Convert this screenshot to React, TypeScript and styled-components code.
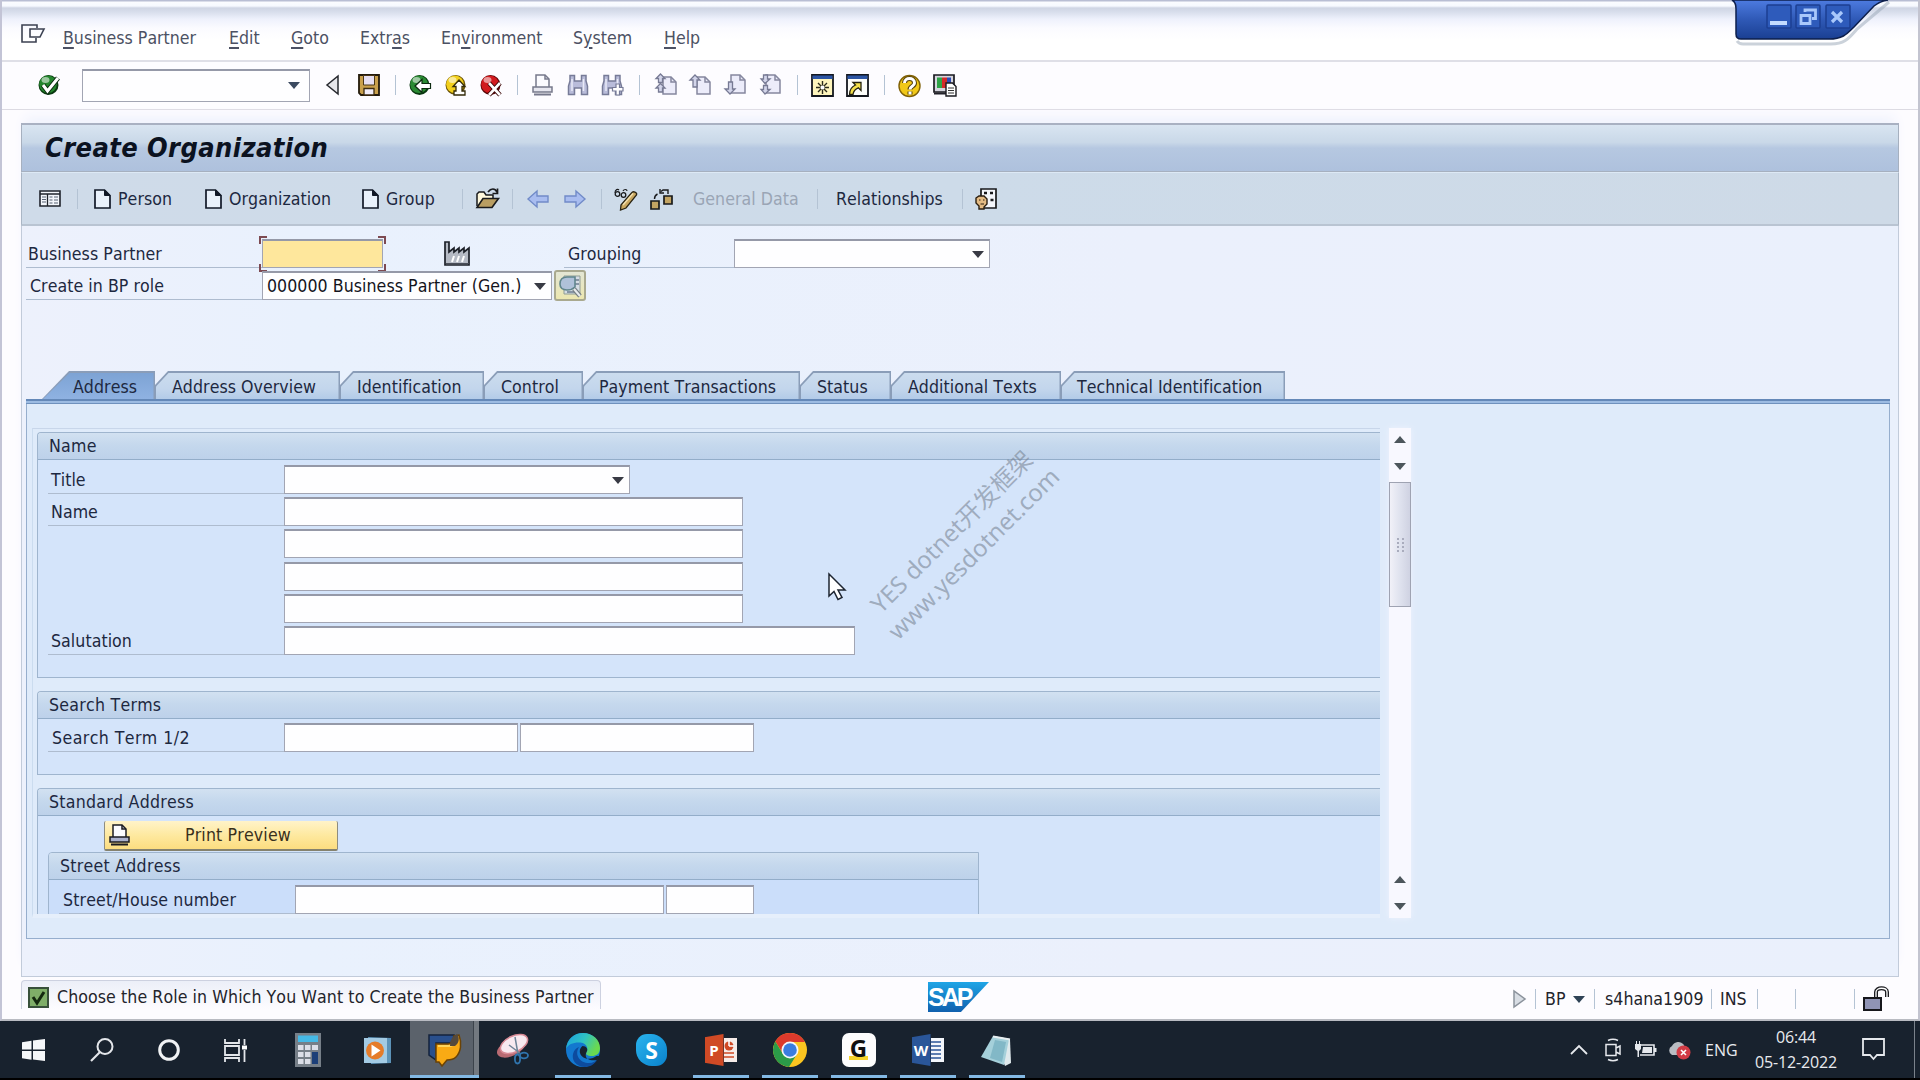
import React from "react";
import styled, { createGlobalStyle, css } from "styled-components";

const GlobalStyle = createGlobalStyle`
  * {
    box-sizing: border-box;
  }
  body {
    margin: 0;
    overflow: hidden;
    background: #000;
    font-family: "DejaVu Sans Condensed", "DejaVu Sans", sans-serif;
    font-stretch: condensed;
    font-kerning: none;
    font-size: 17.6px;
    letter-spacing: 0.05px;
    color: #1d2840;
  }
  svg {
    display: block;
    flex: none;
    overflow: visible;
  }
`;

interface ISpace {
  $ml?: number;
  $w?: number;
}

const Screen = styled.div`
  width: 1920px;
  height: 1080px;
  display: flex;
  flex-direction: column;
  position: relative;
  overflow: hidden;
  background: #000;
`;

const Window = styled.div`
  height: 1021px;
  display: flex;
  flex-direction: column;
  background: #fdfcff;
  border-left: 2px solid #c3c4d6;
  border-right: 2px solid #c3c4d0;
  border-bottom: 2px solid #b9bbc2;
`;

const MenuBar = styled.nav`
  height: 60px;
  flex: none;
  display: flex;
  padding-left: 19px;
  align-items: center;
  padding-top: 15px;
  color: #4c5163;
  letter-spacing: 0;
  background: linear-gradient(
    #b9bed4 0,
    #b9bed4 1px,
    #fbfcff 2px,
    #f6f9ff 6px,
    #cfd5e4 8px,
    #d8deec 12px,
    #eef1fc 19px,
    #fbfbff 28px,
    #fff 40px
  );
`;

const MenuIcon = styled.span`
  margin-top: -8px;
`;

const MenuItem = styled.span<ISpace>`
  margin-left: ${(props) => props.$ml ?? 32}px;
  width: ${(props) => props.$w}px;
  white-space: nowrap;
  u {
    text-underline-offset: 3px;
    text-decoration-thickness: 1.5px;
  }
`;

const SystemBar = styled.div`
  height: 50px;
  flex: none;
  display: flex;
  align-items: center;
  padding-left: 36px;
  padding-bottom: 1px;
  border-top: 2px solid #dfdfe7;
  border-bottom: 1px solid #dcdae2;
`;

const Slot = styled.span<ISpace>`
  display: flex;
  align-items: center;
  flex: none;
  margin-left: ${(props) => props.$ml ?? 13}px;
  width: ${(props) => props.$w ?? 22}px;
  white-space: nowrap;
`;

const Divider = styled.span<ISpace>`
  flex: none;
  margin-left: ${(props) => props.$ml ?? 15}px;
  width: 1px;
  height: 20px;
  background: #b4c3d4;
`;

const fieldEdge = css`
  border: 1px solid #a2a5b3;
  border-top: 2px solid #9599a8;
`;

const Field = styled.div<ISpace & { $h?: number; $pad?: number; $key?: boolean }>`
  ${fieldEdge}
  flex: none;
  position: relative;
  display: flex;
  align-items: center;
  justify-content: space-between;
  width: ${(props) => props.$w}px;
  height: ${(props) => props.$h ?? 29}px;
  margin-left: ${(props) => props.$ml ?? 0}px;
  padding: 0 ${(props) => props.$pad ?? 5}px 0 4px;
  background: ${(props) => (props.$key ? "#fee79c" : "#fefeff")};
  color: #14141c;
  white-space: nowrap;
`;

const Caret = styled.i<{ $up?: boolean; $color?: string }>`
  width: 0;
  height: 0;
  flex: none;
  border: 6.5px solid transparent;
  border-top: ${(props) => (props.$up ? "0" : `7px solid ${props.$color ?? "#383a44"}`)};
  border-bottom: ${(props) => (props.$up ? `7px solid ${props.$color ?? "#4c565c"}` : "0")};
`;

const ComboCaret = styled(Caret)`
  margin-left: auto;
`;

const LowerCaret = styled(Caret)`
  margin-top: 20px;
`;

const Work = styled.main`
  margin: 13px 19px 0 19px;
  height: 854px;
  flex: none;
  display: flex;
  flex-direction: column;
  border: 1px solid #c2cbda;
  border-top: 0;
  background: linear-gradient(90deg, #edf1fc, #e9f1fd 15%, #ebf0fc 60%, #eaf0fc);
  box-shadow: 0 -10px 12px -4px #eff2fd;
`;

const TitleBar = styled.h1`
  margin: 0 -1px;
  height: 49px;
  flex: none;
  padding-left: 23px;
  line-height: 45px;
  font-size: 27px;
  font-weight: bold;
  font-style: italic;
  color: #0b1220;
  letter-spacing: 0.4px;
  border: 1px solid #a6b0bf;
  border-top: 2px solid #a9b1c2;
  background: linear-gradient(#d9e5f1, #c9d8e8 38%, #b6c8e1 50%, #aec1dd);
`;

const AppBar = styled.div`
  margin: 0 -1px;
  height: 54px;
  flex: none;
  display: flex;
  align-items: center;
  padding-left: 17px;
  border: 1px solid #aab6c5;
  border-top: 1px solid #dde9f5;
  border-bottom: 2px solid #b9c4d2;
  background: linear-gradient(90deg, #cfdbe9, #cddbe9 50%, #cedae7);
`;

const Muted = styled.span`
  color: #9aa5b5;
`;

const Row = styled.div<{ $top?: number; $left?: number }>`
  display: flex;
  flex: none;
  height: 29px;
  margin-top: ${(props) => props.$top ?? 3.2}px;
  padding-left: ${(props) => props.$left ?? 0}px;
`;

const Label = styled.label<ISpace & { $pad?: number; $line?: boolean; $track?: number }>`
  flex: none;
  height: 29px;
  line-height: 31px;
  width: ${(props) => props.$w ?? 236}px;
  margin-left: ${(props) => props.$ml ?? 0}px;
  padding-left: ${(props) => props.$pad ?? 3}px;
  letter-spacing: ${(props) => props.$track ?? 0.05}px;
  border-bottom: 1px solid ${(props) => (props.$line === false ? "transparent" : "#aebccf")};
  white-space: nowrap;
`;

const FocusMark = styled.svg`
  position: absolute;
  left: -4px;
  top: -5px;
`;

const RoleButton = styled.button`
  width: 32px;
  height: 31px;
  margin: -1px 0 0 2px;
  padding: 3px;
  border: 2px solid #a9a98f;
  border-radius: 3px;
  background: linear-gradient(#e3e6d4, #ece7b0);
`;

const TabStrip = styled.div`
  display: flex;
  margin: 71px 0 0 20px;
  height: 28px;
  flex: none;
`;

const Tab = styled.div<{ $w: number; $pad: number; $active?: boolean }>`
  --shape: ${(props) =>
    props.$active
      ? "polygon(27px 0, 100% 0, 100% 100%, 0 100%)"
      : "polygon(13px 0, 100% 0, 100% 100%, 0 100%, 0 14px)"};
  position: relative;
  flex: none;
  width: ${(props) => props.$w}px;
  padding-left: ${(props) => props.$pad}px;
  line-height: 32px;
  white-space: nowrap;
  background: #8a9db8;
  clip-path: var(--shape);
  &::before {
    content: "";
    position: absolute;
    inset: 1.5px 1.5px 0 1px;
    clip-path: var(--shape);
    background: ${(props) =>
      props.$active
        ? "linear-gradient(#7da3d4, #8fb2e2)"
        : "linear-gradient(#cbdcee, #c3d6ec 60%, #b3cbe8)"};
  }
  span {
    position: relative;
  }
`;

const PanelEdge = styled.div`
  height: 5px;
  margin-left: 4px;
  width: 1864px;
  flex: none;
  border-top: 2px solid #6488b8;
  border-bottom: 1px solid #6f91bd;
  background: #9cbbe2;
`;

const TabPanel = styled.section`
  margin-left: 4px;
  width: 1864px;
  height: 535px;
  flex: none;
  padding: 24px 0 0 5px;
  border: 1px solid #96aecd;
  border-top: 0;
  background: #dfebfa;
  display: flex;
  align-items: flex-start;
`;

const ScrollArea = styled.div`
  width: 1348px;
  height: 490px;
  overflow: hidden;
  padding: 3px 0 0 4px;
  border-top: 1px solid #c8d6ea;
  border-left: 1px solid #cbdcef;
  border-bottom: 4px solid #e6effb;
`;

const Group = styled.div<{ $h: number; $w?: number; $tone?: string; $ml?: number; $closed?: boolean }>`
  width: ${(props) => props.$w ?? 1343}px;
  height: ${(props) => props.$h}px;
  margin: 0 0 13px ${(props) => props.$ml ?? 0}px;
  background: ${(props) => props.$tone ?? "#d4e4fa"};
  border: 1px solid #9fb5ce;
  border-right-width: ${(props) => (props.$closed ? 1 : 0)}px;
  border-radius: 4px 0 0 0;
  overflow: hidden;
`;

const GroupTitle = styled.h2`
  margin: 0;
  height: 27px;
  padding-left: 11px;
  font-size: 17.6px;
  font-weight: normal;
  line-height: 27px;
  letter-spacing: 0.25px;
  border-bottom: 1px solid #93adc9;
  background: linear-gradient(#d2e1f1, #c5d8ed 45%, #bdd1ea);
`;

const PrintButton = styled.button`
  width: 234px;
  height: 30px;
  margin: 5px 0 1px 66px;
  padding: 0 0 0 4px;
  display: flex;
  align-items: center;
  font: inherit;
  letter-spacing: 0.15px;
  color: #39301c;
  border: 1px solid #8d8c80;
  border-top: 0;
  border-bottom: 2px solid #85826e;
  border-radius: 2px;
  background: linear-gradient(#fff3c9, #fee9a0 50%, #fcdd80);
  span {
    margin-left: 55px;
  }
`;

const Scrollbar = styled.div`
  width: 22px;
  height: 490px;
  margin-left: 9px;
  display: flex;
  flex-direction: column;
  align-items: center;
  background: #f8f8ff;
  box-shadow: 0 0 6px #eef2fd;
  padding: 8px 0 8px;
`;

const Thumb = styled.div`
  width: 22px;
  height: 125px;
  margin: 12px 0 auto;
  border: 1px solid #9fa3b2;
  background: linear-gradient(90deg, #f1f1f8, #dfe2ee 50%, #cfd2e2);
  display: flex;
  align-items: center;
  justify-content: center;
`;

const StatusBar = styled.footer`
  height: 42px;
  display: flex;
  padding: 3px 0 0 19px;
  align-items: flex-start;
  color: #23242b;
`;

const StatusText = styled.div`
  width: 580px;
  height: 29px;
  display: flex;
  align-items: center;
  padding: 4px 0 0 6px;
  gap: 8px;
  border: 1px solid #cdd1e0;
  border-bottom: 0;
  border-radius: 4px 4px 0 0;
  background: linear-gradient(#eceff8, #fdfcff);
  letter-spacing: 0.08px;
  white-space: nowrap;
`;

const SapLogo = styled.div`
  width: 61px;
  height: 30px;
  margin: 2px 0 0 327px;
  clip-path: polygon(0 0, 100% 0, 54% 100%, 0 100%);
  background: linear-gradient(#1fa5e6, #1060ae);
  color: #fff;
  font: bold 25px/31px "Liberation Sans", Arial, sans-serif;
  letter-spacing: -3px;
`;

const StatusInfo = styled.div`
  display: flex;
  align-items: center;
  height: 26px;
  margin: 6px 0 0 524px;
`;

const Taskbar = styled.div`
  height: 57px;
  flex: none;
  display: flex;
  background: #18222e;
  color: #e8ebef;
  font-family: "Open Sans", "Noto Sans", sans-serif;
  font-stretch: normal;
  font-size: 16px;
`;

const Task = styled.div<{ $w?: number; $active?: boolean; $open?: boolean }>`
  width: ${(props) => props.$w ?? 69}px;
  height: 57px;
  flex: none;
  display: flex;
  align-items: center;
  justify-content: center;
  padding-top: 1px;
  position: relative;
  background: ${(props) => (props.$active ? "#5b626b" : "none")};
  box-shadow: ${(props) => (props.$active ? "inset -5px 0 #737980, inset -6px 0 #3c434b" : "none")};
  &::after {
    content: "";
    display: ${(props) => (props.$open || props.$active ? "block" : "none")};
    position: absolute;
    bottom: 0;
    height: 3px;
    left: ${(props) => (props.$active ? 0 : 6.5)}px;
    right: ${(props) => (props.$active ? 0 : 6.5)}px;
    background: #83b9e4;
  }
`;

const SkypeBadge = styled.div`
  width: 31px;
  height: 32px;
  border-radius: 11px 16px 11px 16px;
  background: linear-gradient(135deg, #2ab4ee, #0a82cc);
  color: #fff;
  font: bold 23px/32px "Open Sans", sans-serif;
  text-align: center;
`;

const GBadge = styled.div`
  width: 34px;
  height: 34px;
  border-radius: 7px;
  background: linear-gradient(#f7d42c, #f7d42c) 7px 23px / 19px 4px no-repeat #fdfdfd;
  color: #111;
  font: bold 24px/29px "Open Sans", sans-serif;
  text-align: center;
`;

const OfficeIcon = styled.div<{ $color: string }>`
  display: flex;
  align-items: center;
  span {
    width: 19px;
    height: 32px;
    clip-path: polygon(0 10%, 100% 0, 100% 100%, 0 90%);
    background: ${(props) => props.$color};
    color: #fff;
    font: bold 15px/32px "Open Sans", sans-serif;
    text-align: center;
  }
`;

const Tray = styled.div`
  margin-left: auto;
  display: flex;
  align-items: center;
  width: 354px;
`;

const Clock = styled.div`
  width: 90px;
  margin-left: 14px;
  line-height: 25px;
  text-align: center;
  letter-spacing: -0.15px;
  padding-top: 1px;
`;

const ShowDesktop = styled.i`
  width: 1px;
  height: 57px;
  margin-left: auto;
  margin-right: 5px;
  background: #7a828b;
`;

const WindowControls = styled.svg`
  position: absolute;
  left: 1729px;
  top: 0;
`;

const Pointer = styled.svg`
  position: absolute;
  left: 828px;
  top: 573px;
`;

const Watermark = styled.div`
  position: absolute;
  left: 832px;
  top: 511px;
  width: 260px;
  text-align: center;
  transform: rotate(-45deg);
  font-family: "Noto Sans", "Noto Sans CJK SC", sans-serif;
  font-stretch: normal;
  font-size: 24px;
  line-height: 31px;
  letter-spacing: 0;
  color: rgba(118, 130, 145, 0.58);
  white-space: nowrap;
`;

/* ---------- icons ---------- */

interface IBox {
  w?: number;
  h?: number;
  children: React.ReactNode;
}

const Ico = ({ w = 22, h = 22, children }: IBox) => (
  <svg width={w} height={h} viewBox={`0 0 ${w} ${h}`} fill="none">
    {children}
  </svg>
);

const Ball = ({ color, edge, children }: { color: string; edge: string; children: React.ReactNode }) => (
  <Ico>
    <circle cx="10.5" cy="11" r="10" fill={edge} />
    <circle cx="10" cy="10.3" r="8.8" fill={color} />
    <ellipse cx="7.5" cy="6" rx="4" ry="3" fill="#fff" opacity=".55" />
    {children}
  </Ico>
);

const NewPage = () => (
  <Ico w={17} h={20}>
    <path d="M1 1h9.500l5.500 5.500V19H1z" fill="#e9f1fb" stroke="#111827" strokeWidth="1.700" />
    <path d="M10.500 1v5.500H16z" fill="#111827" stroke="#111827" />
  </Ico>
);

const PrinterIcon = ({ ink, fill }: { ink: string; fill: string }) => (
  <Ico w={21} h={22}>
    <path d="M4 13V1h9l4 4v8" fill="#fbfbff" stroke={ink} strokeWidth="1.500" />
    <path d="M13 1v4h4" stroke={ink} strokeWidth="1.500" />
    <path d="M1 13h19v5H1z" fill={fill} stroke={ink} strokeWidth="1.500" />
    <path d="M2 20.500h17" stroke={ink} strokeWidth="2" />
  </Ico>
);

const Binoculars = ({ plus }: { plus?: boolean }) => (
  <Ico w={23}>
    <path
      d="M3 1.500h4.500V7h7V1.500H19V7l1.500 5v8.500h-6V14h-7v6.500h-6V12L3 7z"
      fill="#b9bcda"
      stroke="#777b98"
      strokeWidth="1.500"
    />
    <path d="M5 5v12M16.500 5v12" stroke="#e9eaf8" strokeWidth="1.500" />
    {plus && (
      <path d="M15 10h3.500v3.500H22V17h-3.500v4H15v-4h-3.500v-3.500H15z" fill="#fff" stroke="#777b98" strokeWidth="1.200" />
    )}
  </Ico>
);

const PageNav = ({ arrows, flip }: { arrows: string; flip?: boolean }) => (
  <Ico>
    <path d={flip ? "M6 1h9l5 5v13H6z" : "M8 3h8l5 5v12H8z"} fill="#ececfa" stroke="#85879f" strokeWidth="1.500" />
    <path d={flip ? "M15 1v5h5" : "M16 3v5h5"} stroke="#85879f" strokeWidth="1.500" />
    <path d={arrows} fill="#d3d5ea" stroke="#777a94" strokeWidth="1.300" />
  </Ico>
);

const BlueArrow = ({ right }: { right?: boolean }) => (
  <Ico w={22} h={18}>
    <path
      d="M1 9l9-8v5h11v6H10v5z"
      transform={right ? "translate(22 0) scale(-1 1)" : undefined}
      fill="#a9bdf0"
      stroke="#718bc8"
      strokeWidth="1.400"
    />
  </Ico>
);

const SystemTools = () => (
  <SystemBar>
    <Slot $ml={0}>
      <Ball color="#23852c" edge="#0a3810">
        <path d="M5 11l4.500 6L20 4" stroke="#0b2c10" strokeWidth="5" />
        <path d="M5 11l4.500 6L20 4" stroke="#fff" strokeWidth="3" />
      </Ball>
    </Slot>
    <Field $w={228} $h={33} $ml={22} $pad={9}>
      <ComboCaret $color="#3b4a60" />
    </Field>
    <Slot $ml={16} $w={13}>
      <Ico w={13} h={20}>
        <path d="M12 1v18L1 10z" fill="#e6e6ea" stroke="#26282e" strokeWidth="1.500" />
      </Ico>
    </Slot>
    <Slot $ml={19}>
      <Ico>
        <path d="M1 1h20v20H3l-2-2z" fill="#c9a04c" stroke="#231a0c" strokeWidth="1.800" />
        <path d="M5.500 1.500h11V11h-11z" fill="#e6dff2" stroke="#4a3616" />
        <path d="M6 14.500h10V21H6z" fill="#f2eefa" stroke="#3c2b10" strokeWidth="1.300" />
      </Ico>
    </Slot>
    <Divider />
    <Slot>
      <Ball color="#2a8a33" edge="#0a3810">
        <path d="M6 12l7-6.500V9.500h8.500v5H13v4z" fill="#fff" stroke="#0c2a10" strokeWidth="1.200" />
      </Ball>
    </Slot>
    <Slot $ml={14}>
      <Ball color="#f2cf1c" edge="#6b5305">
        <path d="M14 6l6 6.500h-3V17h3v4H9v-4h2v-4.500H8z" fill="#fff" stroke="#332a08" strokeWidth="1.300" />
      </Ball>
    </Slot>
    <Slot>
      <Ball color="#d11a1e" edge="#5a0708">
        <path d="M9 9l11 12M20 9L9 21" stroke="#3a0606" strokeWidth="4.500" />
        <path d="M9 9l11 12M20 9L9 21" stroke="#fff" strokeWidth="2.600" />
      </Ball>
    </Slot>
    <Divider />
    <Slot $ml={14} $w={21}>
      <PrinterIcon ink="#77798c" fill="#e6e6ef" />
    </Slot>
    <Slot $ml={14}>
      <Binoculars />
    </Slot>
    <Slot $ml={12} $w={23}>
      <Binoculars plus />
    </Slot>
    <Divider />
    <Slot $ml={15}>
      <PageNav arrows="M5.500 0l4.500 4.500H7.500v4H3.500v-4H1zM5.500 9.500L10 14H7.500v4H3.500v-4H1z" />
    </Slot>
    <Slot $ml={12}>
      <PageNav arrows="M6 1l5 5H8v7H4V6H1z" />
    </Slot>
    <Slot $ml={14}>
      <PageNav flip arrows="M5 20l5-5H7.500V8h-4v7H0z" />
    </Slot>
    <Slot>
      <PageNav flip arrows="M5 9.500l5-4.500H7.500V1h-4v4H1zM5 20l5-4.500H7.500v-4h-4v4H1z" />
    </Slot>
    <Divider />
    <Slot>
      <Ico w={23} h={23}>
        <path d="M1 1h21v21H1z" fill="#fff6bd" stroke="#15181f" strokeWidth="1.800" />
        <path d="M1.500 1.500h20V5h-20z" fill="#2c55a4" />
        <path d="M11.500 7v13M5 13.500h13M7 9l9 9M16 9l-9 9" stroke="#2b2b1c" strokeWidth="1.400" />
        <circle cx="11.500" cy="13.500" r="2" fill="#fff" />
      </Ico>
    </Slot>
    <Slot>
      <Ico w={23} h={23}>
        <path d="M1 1h21v21H1z" fill="#fdfdfa" stroke="#15181f" strokeWidth="1.800" />
        <path d="M1.500 1.500h20V5h-20z" fill="#2c55a4" />
        <path d="M7 8.500h8v8l-2.700-2.700C9 15 7.500 17 7 20.500H3.500C3.500 16 6 12.500 9.500 11z" fill="#f5e04a" stroke="#22200e" strokeWidth="1.300" />
      </Ico>
    </Slot>
    <Divider $ml={16} />
    <Slot $w={23}>
      <Ico w={23} h={23}>
        <circle cx="11.500" cy="12" r="10.500" fill="#f1c818" stroke="#806107" strokeWidth="1.400" />
        <path d="M6.500 9c0-6 10-6 10 0 0 3.500-4.500 3-4.500 6.500M12 17.500v3" stroke="#54400a" strokeWidth="5" />
        <path d="M6.500 9c0-6 10-6 10 0 0 3.500-4.500 3-4.500 6.500M12 17.500v3" stroke="#fff" strokeWidth="3" />
      </Ico>
    </Slot>
    <Slot $ml={12} $w={24}>
      <Ico w={24} h={23}>
        <path d="M1 1h20v17H1z" fill="#d5d5de" stroke="#1a1a20" strokeWidth="1.700" />
        <path d="M4 3.500h5V14H4z" fill="#2fa347" />
        <path d="M9 3.500h5V14H9z" fill="#d42a2a" />
        <path d="M14 3.500h4V14h-4z" fill="#2c49b5" />
        <path d="M1 19.500h14" stroke="#22222a" strokeWidth="2" />
        <path d="M13 9h6.500l3.500 3.500V22H13z" fill="#fff" stroke="#1a1a20" strokeWidth="1.400" />
        <path d="M15 14h6M15 16.500h6M15 19h6" stroke="#333" />
      </Ico>
    </Slot>
  </SystemBar>
);

const AppTools = () => (
  <AppBar>
    <Slot $ml={0}>
      <Ico h={17}>
        <path d="M1 1h20v15H1z" fill="#f3f6fb" stroke="#20242c" strokeWidth="1.600" />
        <path d="M1 4h20M8.500 4v12" stroke="#20242c" strokeWidth="1.300" />
        <path d="M3 7h4M3 9.500h4M3 12h4M10.500 7h3M15 7h4M10.500 10h3M15 10h4M10.500 13h3M15 13h4" stroke="#596273" strokeWidth="1.200" />
      </Ico>
    </Slot>
    <Divider $ml={16} />
    <Slot $ml={16} $w={24}>
      <NewPage />
    </Slot>
    <Slot $ml={0} $w={87}>
      Person
    </Slot>
    <Slot $ml={0} $w={24}>
      <NewPage />
    </Slot>
    <Slot $ml={0} $w={133}>
      Organization
    </Slot>
    <Slot $ml={0} $w={24}>
      <NewPage />
    </Slot>
    <Slot $ml={0} $w={47}>
      Group
    </Slot>
    <Divider $ml={29} />
    <Slot $w={23}>
      <Ico w={24} h={21}>
        <path d="M1 18V6l2-2h5l2 3h7v4" fill="#fff8dc" stroke="#191a1c" strokeWidth="1.500" />
        <path d="M1 19.500l6-9h15.500l-6.500 9z" fill="#b99e62" stroke="#191a1c" strokeWidth="1.600" />
        <path d="M12 4c3-4 7-4 9 0M21.500.500v5h-5" stroke="#191a1c" strokeWidth="1.700" />
      </Ico>
    </Slot>
    <Divider $ml={13} />
    <Slot $ml={14}>
      <BlueArrow />
    </Slot>
    <Slot $ml={15}>
      <BlueArrow right />
    </Slot>
    <Divider $ml={15} />
    <Slot $ml={12} $w={24}>
      <Ico w={24} h={22}>
        <path d="M7 17L17.500 5c1.500-2.500 6-.500 5 2L12 20l-5.500 2z" fill="#c9a760" stroke="#2a2413" strokeWidth="1.300" />
        <path d="M9 17L19 5.500" stroke="#f1dfae" strokeWidth="1.500" />
        <path d="M1 5c0-4 3-4 4-3M9 3c1-2 4-2 4 0" stroke="#191a1c" strokeWidth="1.200" />
        <circle cx="3.500" cy="6" r="2.300" stroke="#191a1c" strokeWidth="1.300" />
        <circle cx="9.500" cy="7" r="2.300" stroke="#191a1c" strokeWidth="1.300" />
      </Ico>
    </Slot>
    <Slot $ml={12}>
      <Ico w={23} h={22}>
        <path d="M1 13h8v8H1z" fill="#c3a462" stroke="#191a1c" strokeWidth="1.700" />
        <path d="M14 8h8v8h-8z" fill="#c3a462" stroke="#191a1c" strokeWidth="1.700" />
        <path d="M4.500 11c0-3 1-4 3-5M11 3.500l2-1.500h5v4M10 1v4h4" stroke="#191a1c" strokeWidth="1.400" />
      </Ico>
    </Slot>
    <Slot $ml={21} $w={104}>
      <Muted>General Data</Muted>
    </Slot>
    <Divider $ml={20} />
    <Slot $ml={18} $w={107}>
      Relationships
    </Slot>
    <Divider $ml={19} />
    <Slot $ml={12}>
      <Ico h={22}>
        <path d="M6 1h15v19H6z" fill="#f4f6fb" stroke="#191a1c" strokeWidth="1.700" />
        <path d="M9 5h3M15 5h3M15.500 12h3" stroke="#191a1c" strokeWidth="2.500" />
        <path d="M1 10l3-2h5l3 3v5l-3 3v2H4v-3l-3-3z" fill="#e4bb84" stroke="#2a1e10" strokeWidth="1.400" />
        <path d="M4 12h1.500M8 12h1.500M5.500 16h3.500" stroke="#2a1e10" strokeWidth="1.200" />
      </Ico>
    </Slot>
  </AppBar>
);

const tabs = [
  { text: "Address", w: 113, pad: 31, active: true },
  { text: "Address Overview", w: 185, pad: 17 },
  { text: "Identification", w: 144, pad: 17 },
  { text: "Control", w: 99, pad: 17 },
  { text: "Payment Transactions", w: 217, pad: 16 },
  { text: "Status", w: 91, pad: 17 },
  { text: "Additional Texts", w: 170, pad: 17 },
  { text: "Technical Identification", w: 224, pad: 16 },
];

const AddressTab = () => (
  <TabPanel>
    <ScrollArea>
      <Group $h={246}>
        <GroupTitle>Name</GroupTitle>
        <Row $top={5} $left={10}>
          <Label>Title</Label>
          <Field $w={346}>
            <ComboCaret />
          </Field>
        </Row>
        <Row $left={10}>
          <Label>Name</Label>
          <Field $w={459} />
        </Row>
        <Row $left={10}>
          <Label $line={false} />
          <Field $w={459} />
        </Row>
        <Row $left={10}>
          <Label $line={false} />
          <Field $w={459} />
        </Row>
        <Row $left={10}>
          <Label $line={false} />
          <Field $w={459} />
        </Row>
        <Row $left={10}>
          <Label>Salutation</Label>
          <Field $w={571} />
        </Row>
      </Group>
      <Group $h={84}>
        <GroupTitle>Search Terms</GroupTitle>
        <Row $top={4} $left={10}>
          <Label $pad={4} $track={0.42}>
            Search Term 1/2
          </Label>
          <Field $w={234} />
          <Field $w={234} $ml={2} />
        </Row>
      </Group>
      <Group $h={160}>
        <GroupTitle>Standard Address</GroupTitle>
        <PrintButton>
          <PrinterIcon ink="#1b1b22" fill="#aab0cc" />
          <span>Print Preview</span>
        </PrintButton>
        <Group $h={120} $w={931} $ml={10} $tone="#cbdefa" $closed>
          <GroupTitle>Street Address</GroupTitle>
          <Row $top={5} $left={10}>
            <Label $pad={4} $track={0.15}>
              Street/House number
            </Label>
            <Field $w={369} />
            <Field $w={88} $ml={2} />
          </Row>
        </Group>
      </Group>
    </ScrollArea>
    <Scrollbar>
      <Caret $up />
      <LowerCaret $color="#4c565c" />
      <Thumb>
        <Ico w={9} h={14}>
          <path d="M2 0v14M7 0v14" stroke="#a9acbd" strokeWidth="2" strokeDasharray="2 2" />
        </Ico>
      </Thumb>
      <Caret $up />
      <LowerCaret $color="#4c565c" />
    </Scrollbar>
  </TabPanel>
);

const Tasks = () => (
  <Taskbar>
    <Task $w={67}>
      <Ico w={23} h={22}>
        <path d="M0 3.200l9.500-1.400V10.500H0zM11 1.600L23 0v10.500H11zM0 12h9.500v8.700L0 19.300zM11 12h12v10l-12-1.600z" fill="#f5f7f9" />
      </Ico>
    </Task>
    <Task>
      <Ico w={24} h={24}>
        <circle cx="15" cy="8.500" r="7.500" stroke="#e3e6ea" strokeWidth="2" />
        <path d="M10 14L1 23" stroke="#e3e6ea" strokeWidth="2.200" />
      </Ico>
    </Task>
    <Task $w={65}>
      <Ico>
        <circle cx="11" cy="11" r="9.300" stroke="#f1f3f5" strokeWidth="3" />
      </Ico>
    </Task>
    <Task $w={70}>
      <Ico w={24} h={23}>
        <path d="M1 0v4h14V0M1 7h14v9H1zM1 23v-4h14v4M20.500 0v6M20.500 11v12" stroke="#e3e6ea" strokeWidth="1.800" />
        <path d="M18 6.500h5v4h-5z" fill="#fff" />
      </Ico>
    </Task>
    <Task $w={74}>
      <Ico w={26} h={34}>
        <path d="M0 0h26v34H0z" fill="#767f88" />
        <path d="M3 2.500h20V9H3z" fill="#45b9e6" />
        <path d="M3 12h5.500v5H3zM10 12h5.500v5H10zM17 12h6v5h-6zM3 19h5.500v5H3zM10 19h5.500v5H10zM3 26h5.500v5H3zM10 26h5.500v5H10z" fill="#dcdfe8" />
        <path d="M17 19h6v12h-6z" fill="#1c3f78" />
      </Ico>
    </Task>
    <Task $w={65}>
      <Ico w={28} h={27}>
        <path d="M4 0l23 1v25l-20 1z" fill="#5c93b8" />
        <path d="M0 1h23v25H0z" fill="#a3cbe4" />
        <circle cx="11" cy="13.500" r="9" fill="#e57c2a" />
        <path d="M7.500 7.500l9 6-9 6z" fill="#fff" />
      </Ico>
    </Task>
    <Task $w={69} $active>
      <Ico w={34} h={33}>
        <path d="M1 1h25v8H8v17l-7-5z" fill="#294f8c" stroke="#14233d" strokeWidth="1.500" />
        <path
          d="M8 10h12c3 0 5-3 6-8l5-1c3 8 2 17-3 22-3 3-6 3-9 3l-5 6-3-4H8z"
          fill="#f9aa14"
          stroke="#6b4306"
          strokeWidth="1.500"
        />
        <path d="M10 12h11c3 0 5-2 6-4" stroke="#ffd45c" strokeWidth="2" />
        <path d="M22 12c0-6 2-9 7-12 3 4 2 9-2 12z" fill="#54493c" />
      </Ico>
    </Task>
    <Task>
      <Ico w={33} h={32}>
        <ellipse cx="14" cy="14" rx="15" ry="8" transform="rotate(-25 14 14)" fill="#b86a72" />
        <ellipse cx="17" cy="10" rx="14.500" ry="8" transform="rotate(-25 17 10)" fill="#f8eaf0" stroke="#d78a95" strokeWidth="1.500" />
        <path d="M18 3l3 17M12 11l12 9" stroke="#6f8498" strokeWidth="1.500" />
        <ellipse cx="20.500" cy="25" rx="2.600" ry="4.500" stroke="#3074ad" strokeWidth="1.800" />
        <ellipse cx="27" cy="21.500" rx="4" ry="2.800" stroke="#3074ad" strokeWidth="1.800" />
      </Ico>
    </Task>
    <Task $open>
      <Ico w={34} h={34}>
        <defs>
          <linearGradient id="wave" x1="0" y1="0" x2="1" y2=".4">
            <stop offset="0" stopColor="#1b9fe0" />
            <stop offset=".55" stopColor="#2fc3c4" />
            <stop offset="1" stopColor="#6bd94f" />
          </linearGradient>
        </defs>
        <circle cx="17" cy="17" r="17" fill="#1378cf" />
        <path d="M0 16C1 6 8 0 17 0c10 0 17 7 17 15 0 6-4 8-8 8-5 0-7-2-5.500-4 2-2.500 1-8.500-6-9.500C8 9 2 11 0 16z" fill="url(#wave)" />
        <path d="M13 14c-5 8 1 16 10 16 4 0 7-2 8.500-3.500C26 36 14 36 8.500 29 5 24 7 16 13 14z" fill="#0d4b9e" />
        <path d="M20.500 19c2-2.500 0-6-4-6-3 2-4.500 8 1 11.500 4.500 2.500 10 1 13-1.500l3.500 0-3 4c-5 1-14 0-10.500-8z" fill="#18222e" />
      </Ico>
    </Task>
    <Task>
      <SkypeBadge>S</SkypeBadge>
    </Task>
    <Task $open>
      <OfficeIcon $color="#d04a25">
        <span>P</span>
        <Ico w={13} h={24}>
          <path d="M0 0h13v24H0z" fill="#f6ece8" />
          <circle cx="5" cy="8" r="4.500" fill="#d04a25" />
          <path d="M5 8V2M5 8h5" stroke="#fff" strokeWidth="1.500" />
          <path d="M0 15h10M0 19h10" stroke="#d04a25" strokeWidth="1.600" />
        </Ico>
      </OfficeIcon>
    </Task>
    <Task $open>
      <Ico w={34} h={34}>
        <circle cx="17" cy="17" r="17" fill="#fbc520" />
        <path d="M17 9h14.900A17 17 0 0 0 2.300 8.500l7.700 12z" fill="#dc3a2c" />
        <path d="M2.300 8.500A17 17 0 0 0 16 34l8-13-14 0z" fill="#2b9b48" />
        <circle cx="17" cy="17" r="8.500" fill="#f5f7fa" />
        <circle cx="17" cy="17" r="6.800" fill="#3a7de0" />
      </Ico>
    </Task>
    <Task $open>
      <GBadge>G</GBadge>
    </Task>
    <Task $open>
      <OfficeIcon $color="#2a5699">
        <span>W</span>
        <Ico w={13} h={24}>
          <path d="M0 0h13v24H0z" fill="#f4f7fb" />
          <path d="M0 4h10M0 8h10M0 12h10M0 16h10M0 20h10" stroke="#2a5699" strokeWidth="1.500" />
        </Ico>
      </OfficeIcon>
    </Task>
    <Task $open>
      <Ico w={32} h={31}>
        <path d="M12 1l17 3 1 24-6 3z" fill="#dfe9ec" />
        <path d="M12 1l16 3-5 26-23-8z" fill="#a5d0da" />
        <path d="M14 5l11 2-4 20-12-4z" fill="#5f9fb3" opacity=".5" />
        <path d="M12 1.500l17 3" stroke="#e7eef0" strokeWidth="2" />
      </Ico>
    </Task>
    <Tray>
      <Slot $ml={4} $w={18}>
        <Ico w={18} h={10}>
          <path d="M1 9l8-8 8 8" stroke="#e6e9ed" strokeWidth="1.800" />
        </Ico>
      </Slot>
      <Slot $ml={17} $w={17}>
        <Ico w={17} h={24}>
          <path d="M1 6.500h10v11H1zM11 10l4-2v8l-4-2M3 2.500q5-2.500 10 0M3 21.500q5 2.500 10 0" stroke="#e6e9ed" strokeWidth="1.500" />
        </Ico>
      </Slot>
      <Slot $ml={12} $w={23}>
        <Ico w={23} h={17}>
          <path d="M7 4h13v10H6" stroke="#e6e9ed" strokeWidth="1.600" />
          <path d="M9 6h9v6H8zM20 7h2.500v4H20zM1 3h6v5l-2 2v6H3.500v-6L1 8zM2 0h1v3H2zM5 0h1v3H5z" fill="#e6e9ed" />
        </Ico>
      </Slot>
      <Slot $ml={10} $w={24}>
        <Ico w={24} h={18}>
          <path d="M5 14a5 5 0 0 1 0-9 7 7 0 0 1 12-1l2 10z" fill="#b9bcc2" />
          <circle cx="16.500" cy="11.500" r="7" fill="#d23b45" />
          <path d="M14 9l5 5M19 9l-5 5" stroke="#fff" strokeWidth="1.600" />
        </Ico>
      </Slot>
      <Slot $ml={14} $w={32}>
        ENG
      </Slot>
      <Clock>
        06:44
        <br />
        05-12-2022
      </Clock>
      <Slot $ml={21} $w={23}>
        <Ico w={23} h={23}>
          <path d="M1 1h21v16h-7l-3.500 4L8 17H1z" stroke="#e6e9ed" strokeWidth="1.800" />
        </Ico>
      </Slot>
      <ShowDesktop />
    </Tray>
  </Taskbar>
);

export default function App() {
  return (
    <Screen>
      <GlobalStyle />
      <Window>
        <MenuBar>
          <MenuIcon>
            <Ico w={24} h={19}>
              <path d="M15 14v4H1V1h15v3M9 5h14l-4 8H9z" stroke="#3c4252" strokeWidth="1.600" />
            </Ico>
          </MenuIcon>
          <MenuItem $ml={18} $w={134}>
            <u>B</u>usiness Partner
          </MenuItem>
          <MenuItem $w={30}>
            <u>E</u>dit
          </MenuItem>
          <MenuItem $w={37}>
            <u>G</u>oto
          </MenuItem>
          <MenuItem $w={49}>
            Extr<u>a</u>s
          </MenuItem>
          <MenuItem $w={100}>
            En<u>v</u>ironment
          </MenuItem>
          <MenuItem $w={59}>
            S<u>y</u>stem
          </MenuItem>
          <MenuItem $w={37}>
            <u>H</u>elp
          </MenuItem>
        </MenuBar>
        <SystemTools />
        <Work>
          <TitleBar>Create Organization</TitleBar>
          <AppTools />
          <Row $top={13} $left={4}>
            <Label $w={236} $pad={2}>
              Business Partner
            </Label>
            <Field $w={121} $key>
              <FocusMark width="128" height="37" fill="none">
                <path d="M1 8V1h7M119 1h7v7M126 28v7h-7M8 35H1v-7" stroke="#7d4a52" strokeWidth="2" />
              </FocusMark>
            </Field>
            <Slot $ml={61} $w={26}>
              <Ico w={27} h={25}>
                <path
                  d="M1 24V1h4v10l5-4v4l5-4v4l5-4v4l5-4v17z"
                  fill="#b5bac4"
                  stroke="#1d2028"
                  strokeWidth="1.700"
                />
                <path d="M8 21l2-6M13 21l2-6M18 21l2-6" stroke="#fff" strokeWidth="2" />
                <path d="M2 22.500h23" stroke="#4a4e58" />
              </Ico>
            </Slot>
            <Label $ml={94} $w={170} $pad={4}>
              Grouping
            </Label>
            <Field $w={256}>
              <ComboCaret />
            </Field>
          </Row>
          <Row $top={3} $left={4}>
            <Label $w={236} $pad={4}>
              Create in BP role
            </Label>
            <Field $w={290}>
              000000 Business Partner (Gen.)
              <ComboCaret />
            </Field>
            <RoleButton>
              <Ico w={24} h={23}>
                <path d="M5 1h16v18H5z" fill="#d5dde4" stroke="#8f9c93" />
                <path d="M16 5h4M16 9h4M8 17h8" stroke="#8795a5" strokeWidth="2" />
                <path d="M1 9q0-7 7-7h8v10q-3 3-8 3-7 0-7-6z" fill="#afc1d9" stroke="#60868c" strokeWidth="1.600" />
                <path d="M15 14l6 7" stroke="#737c80" strokeWidth="4.500" />
                <path d="M15 14l6 7" stroke="#e6eaec" strokeWidth="2.200" />
              </Ico>
            </RoleButton>
          </Row>
          <TabStrip>
            {tabs.map((tab) => (
              <Tab key={tab.text} $w={tab.w} $pad={tab.pad} $active={tab.active}>
                <span>{tab.text}</span>
              </Tab>
            ))}
          </TabStrip>
          <PanelEdge />
          <AddressTab />
        </Work>
        <StatusBar>
          <StatusText>
            <Ico w={21} h={21}>
              <path d="M1 1h19v19H1z" fill="#7fae68" stroke="#38503a" strokeWidth="2" />
              <path d="M5 10l4 6 7-11" stroke="#14290f" strokeWidth="3" />
            </Ico>
            Choose the Role in Which You Want to Create the Business Partner
          </StatusText>
          <SapLogo>SAP</SapLogo>
          <StatusInfo>
            <Ico w={13} h={18}>
              <path d="M1 1v16l11-8z" fill="#d8dde4" stroke="#8b929c" strokeWidth="1.500" />
            </Ico>
            <Divider $ml={9} />
            <Slot $ml={9} $w={28}>
              BP
            </Slot>
            <Caret $color="#2f4356" />
            <Divider $ml={9} />
            <Slot $ml={10} $w={97}>
              s4hana1909
            </Slot>
            <Divider $ml={9} />
            <Slot $ml={8} $w={28}>
              INS
            </Slot>
            <Divider $ml={9} />
            <Divider $ml={37} />
            <Divider $ml={58} />
            <Slot $ml={8} $w={26}>
              <Ico w={26} h={25}>
                <path d="M13 12V5c0-5 11-5 11 0v5" stroke="#1b1b20" strokeWidth="4" />
                <path d="M13 12V5c0-5 11-5 11 0v5" stroke="#fff" strokeWidth="1.300" />
                <path d="M1 11h17v12H1z" fill="#9094b5" stroke="#17171c" strokeWidth="2" />
              </Ico>
            </Slot>
          </StatusInfo>
        </StatusBar>
      </Window>
      <Tasks />
      <WindowControls width="172" height="52" fill="none">
        <defs>
          <linearGradient id="cap" x1="0" y1="0" x2="0" y2="1">
            <stop offset="0" stopColor="#4d7be0" />
            <stop offset=".5" stopColor="#2f59b6" />
            <stop offset="1" stopColor="#1a3f92" />
          </linearGradient>
        </defs>
        <path d="M8 41q2 3 6 3h88c14 0 18-6 26-15l32-27" stroke="#98a5b6" strokeWidth="3" opacity=".5" />
        <path d="M3 0q4 2 4 9v25q0 5 5 5h88c14 0 18-5 25-12l20-21q6-5 14-6z" fill="url(#cap)" stroke="#0d1f4c" strokeWidth="1.500" />
        <path
          d="M39 5h22q1 0 1 1v21q0 1-1 1H39q-1 0-1-1V6q0-1 1-1zM68 5h22q1 0 1 1v21q0 1-1 1H68q-1 0-1-1V6q0-1 1-1zM98 5h22q1 0 1 1v21q0 1-1 1H98q-1 0-1-1V6q0-1 1-1z"
          fill="#2e5bbb"
          stroke="#1c3f92"
          strokeWidth="1.500"
        />
        <path d="M41 23h17" stroke="#c3dbff" strokeWidth="4" />
        <path d="M72 15.500h9v8h-9zM76 12v-2h10.500v8.500H83" stroke="#a9c8fb" strokeWidth="2.800" />
        <path d="M103 12l10 10M113 12l-10 10" stroke="#a9c8fb" strokeWidth="3.200" />
      </WindowControls>
      <Pointer width="18" height="28" fill="none">
        <path d="M1 1v22l5-4.500 4 8 4-2-4-7.500h7z" fill="#fff" stroke="#1d2430" strokeWidth="1.500" />
      </Pointer>
      <Watermark>
        YES dotnet开发框架
        <br />
        www.yesdotnet.com
      </Watermark>
    </Screen>
  );
}
